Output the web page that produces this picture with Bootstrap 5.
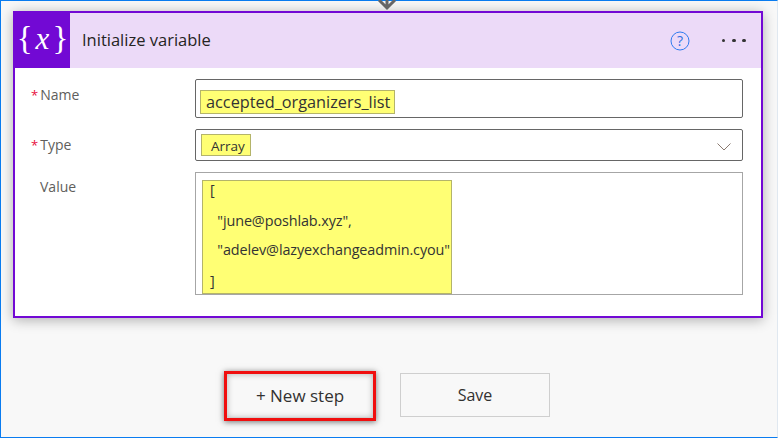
<!DOCTYPE html>
<html lang="en"><head><meta charset="utf-8"><title>Initialize variable</title>
<link href="https://cdn.jsdelivr.net/npm/bootstrap@5.3.0/dist/css/bootstrap.min.css" rel="stylesheet">
<style>
html,body{height:100%;margin:0;overflow:hidden}
body{background:#f8f8f8;font-family:"Open Sans","Noto Sans",sans-serif;color:#323130}
.frame{width:778px;height:438px;border:solid #0a7cf0;border-width:1px 0 1px 1px;border-right:1px solid #e0e8f0;padding:10px 14px 0 12px}
.flow-card{position:relative;width:750px;height:307px;background:#fff;border:2px solid #7209d4;box-shadow:0 2px 12px rgba(0,0,0,.3);border-radius:0}
.down-arrow{position:absolute;left:362px;top:-13px;width:20px;height:12px}
.flow-head{height:55px;background:#ecdaf8}
.var-icon{width:55px;height:55px;background:#7209d4;color:#fff;font-family:"Liberation Serif",serif;font-size:33px;line-height:1;padding-bottom:5px}
.var-icon i{font-size:31px;margin:0 3px}
.flow-title{font-size:16.5px;margin-left:12px;color:#252423}
.head-help{width:20px;height:20px;margin-right:32px}
.head-dots{gap:6.7px;margin-right:15px}
.head-dots span{width:3.6px;height:3.6px;border-radius:50%;background:#333}
.flow-body{padding:11px 18px 0 16px}
.field-row{display:flex}
.field-label{width:164px;font-size:14px;color:#605e5c;padding-top:6px;line-height:19px}
.field-label b{color:#e8103c;font-weight:400;font-size:13px;margin-right:2px}
.type-label{padding-top:6px;margin-top:11px}
.value-label{padding-top:5px;padding-left:9px}
.fake-input{flex:1;background:#fff;border:1px solid #666;border-radius:2px}
.name-box{height:39px;padding:10px 0 0 4px}
.type-box{height:32px;margin-top:11px;padding:4px 11px 0 5px}
.value-row{margin-top:11px}
.value-box{height:123px;border-color:#a6a6a6;border-radius:0;padding:7px 0 0 6px}
.hl{display:inline-block;background:#ffff74;border:1px solid #b4b46a;color:#333}
.hl-name{font-size:16.3px;height:24px;line-height:22px;padding:0 4px 0 5px;white-space:nowrap}
.hl-type{font-size:13.5px;height:22px;line-height:22px;padding:0 5px 0 9px}
.hl-value{width:250px;height:114px;font-size:14.4px;padding:0 0 0 7px;white-space:pre;letter-spacing:-.1px}
.hl-value p{margin:0;height:30px;line-height:30px}
.hl-value p:first-child{height:25px;line-height:18px}
.hl-value p:nth-child(2){height:29px}
.hl-value p:nth-child(3){height:31px}
.chev{margin-top:9px}
.action-row{gap:24px;margin-top:55px;padding-left:211px}
.flow-btn{width:150px;height:44px;border-radius:0;background:#f8f8f8;font-size:16px;color:#323130;padding:0;border:1px solid #cfcfcf}
.step-wrap{border:3px solid #f00e0e;box-shadow:0 1px 6px rgba(0,0,0,.55), inset 0 0 6px rgba(0,0,0,.3);width:152px;height:50px;margin-top:-2px;background:#f8f8f8}
.step-wrap .flow-btn{width:100%;height:44px;background:transparent;border:0;border-bottom:1px solid #cfcfcf;font-size:17px}
</style></head>
<body>
<div class="frame">
  <div class="card flow-card">
    <svg class="down-arrow" viewBox="0 0 20 12" aria-hidden="true"><path d="M2 0 L10 8 L18 0 M10 8 V0" fill="none" stroke="#666" stroke-width="3"/></svg>
    <div class="flow-head d-flex align-items-center">
      <div class="var-icon d-flex align-items-center justify-content-center">{<i>x</i>}</div>
      <div class="flow-title flex-grow-1">Initialize variable</div>
      <svg class="head-help" viewBox="0 0 20 20" aria-hidden="true"><circle cx="10" cy="10" r="9" fill="none" stroke="#2f7bf0" stroke-width="1"/><text x="10" y="15" font-size="14" text-anchor="middle" fill="#2f6fe0" font-family="Open Sans,sans-serif">?</text></svg>
      <div class="head-dots d-flex"><span></span><span></span><span></span></div>
    </div>
    <div class="flow-body">
      <div class="field-row">
        <div class="field-label"><b>*</b>Name</div>
        <div class="fake-input name-box"><span class="hl hl-name">accepted_organizers_list</span></div>
      </div>
      <div class="field-row">
        <div class="field-label type-label"><b>*</b>Type</div>
        <div class="fake-input type-box d-flex justify-content-between">
          <span class="hl hl-type">Array</span>
          <svg width="14" height="8" viewBox="0 0 14 8" class="chev" aria-hidden="true"><path d="M.5 .5 L7 7 L13.5 .5" fill="none" stroke="#8a7a70" stroke-width="1"/></svg>
        </div>
      </div>
      <div class="field-row value-row">
        <div class="field-label value-label">Value</div>
        <div class="fake-input value-box">
          <div class="hl hl-value"><p>[</p><p>  "june@poshlab.xyz",</p><p>  "adelev@lazyexchangeadmin.cyou"</p><p>]</p></div>
        </div>
      </div>
    </div>
  </div>
  <div class="action-row d-flex align-items-start">
    <div class="step-wrap"><button class="btn flow-btn" type="button">+ New step</button></div>
    <button class="btn flow-btn" type="button">Save</button>
  </div>
</div>
<script src="https://cdn.jsdelivr.net/npm/bootstrap@5.3.0/dist/js/bootstrap.bundle.min.js"></script>
</body></html>
